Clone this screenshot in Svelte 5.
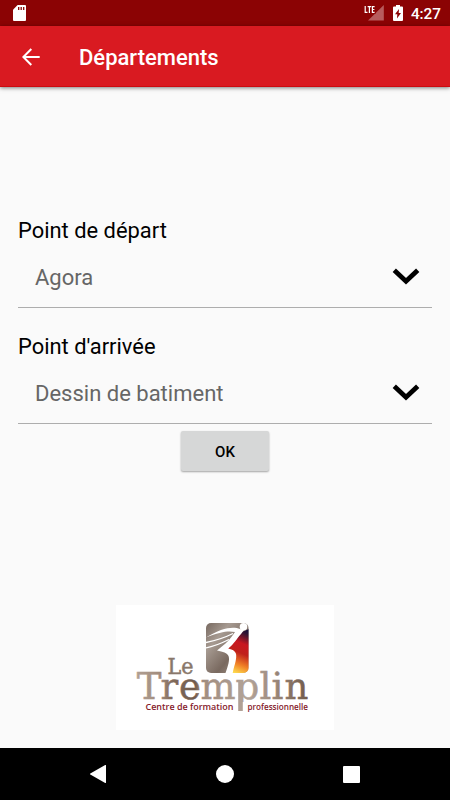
<script lang="ts">
  type Field = { label: string; value: string };

  export let title = 'Départements';
  export let clock = '4:27';
  export let fields: Field[] = [
    { label: 'Point de départ', value: 'Agora' },
    { label: "Point d'arrivée", value: 'Dessin de batiment' },
  ];
</script>

<div class="screen">
  <div class="status">
    <svg class="sd" width="13" height="16" viewBox="0 0 13 16">
      <path fill="#fff" d="M4.6 0H12a1 1 0 0 1 1 1v14a1 1 0 0 1-1 1H1a1 1 0 0 1-1-1V4.8z" />
      <path stroke="#8b0304" stroke-width="1.3" d="M5.700 2v3M8.200 2v3M10.700 2v3" />
    </svg>
    <div class="indicators">
      <svg width="20" height="17" viewBox="0 0 20 17">
        <path fill="#b75c5d" d="M19.800 0v15.500H4z" />
        <path fill="#8b0304" d="M0 0h11.500v9H0z" />
        <path fill="none" stroke="#fff" stroke-width="1.200" d="M1.200 1v6.400h2.300M3.600 1.600h3.600M5.400 1.600V8M10.600 1.600H8.400v5.800h2.200M8.400 4.500h2" />
      </svg>
      <svg class="battery" width="10" height="16" viewBox="0 0 10 16">
        <path fill="#fff" d="M3 0h4v1.500h2a1 1 0 0 1 1 1V15a1 1 0 0 1-1 1H1a1 1 0 0 1-1-1V2.500a1 1 0 0 1 1-1h2z" />
        <path fill="#8b0304" d="M6 4L2 9.300h2.300L4 13.600 8 8H5.700z" />
      </svg>
      <span class="clock">{clock}</span>
    </div>
  </div>

  <header>
    <button class="back" aria-label="Retour">
      <svg width="18" height="18" viewBox="0 0 18 18">
        <path fill="none" stroke="#fff" stroke-width="2" d="M17.700 9H1.500M9.300 1L1.400 9l7.900 8" />
      </svg>
    </button>
    <h1>{title}</h1>
  </header>

  <main>
    {#each fields as field}
      <section class="field">
        <h2>{field.label}</h2>
        <button class="select">
          <span>{field.value}</span>
          <svg width="28" height="18" viewBox="0 0 28 18">
            <path fill="none" stroke="#000" stroke-width="4.800" d="M2.300 2.300L14 13.200 25.700 2.300" />
          </svg>
        </button>
      </section>
    {/each}
    <button class="ok">OK</button>

    <div class="logo">
      <svg width="218" height="125" viewBox="0 0 218 125">
        <defs>
          <linearGradient id="taupe" x1="0" y1="0" x2="1" y2="1">
            <stop offset="0" stop-color="#776960" />
            <stop offset=".28" stop-color="#a69a91" />
            <stop offset=".62" stop-color="#79695f" />
            <stop offset="1" stop-color="#b0a298" />
          </linearGradient>
          <linearGradient id="flame" gradientUnits="userSpaceOnUse" x1="135" y1="25" x2="117" y2="68">
            <stop offset="0" stop-color="#0b0b3c" />
            <stop offset=".12" stop-color="#321432" />
            <stop offset=".34" stop-color="#c91720" />
            <stop offset=".54" stop-color="#c0201b" />
            <stop offset=".78" stop-color="#f08026" />
            <stop offset="1" stop-color="#ffe352" />
          </linearGradient>
          <linearGradient id="letters" gradientUnits="userSpaceOnUse" x1="21" y1="0" x2="192" y2="0">
            <stop offset="0" stop-color="#b09f92" />
            <stop offset=".14" stop-color="#a18b7c" />
            <stop offset=".2" stop-color="#826b5b" />
            <stop offset=".34" stop-color="#715b4c" />
            <stop offset=".38" stop-color="#a08c7e" />
            <stop offset=".65" stop-color="#b2a398" />
            <stop offset=".78" stop-color="#a18e81" />
            <stop offset="1" stop-color="#705a4a" />
          </linearGradient>
          <clipPath id="badge">
            <rect x="90" y="18" width="42.500" height="50" rx="5" />
          </clipPath>
        </defs>
        <g clip-path="url(#badge)">
          <path fill="url(#taupe)" d="M90 18h43v50H90z" />
          <path fill="url(#flame)" d="M133 24l-7 3-16 16 9 5-6 21h20z" />
          <path fill="#fff" d="M124 24C117 21 105 23 90 32.500c14-5.500 22-7 29-5.500-2.500 3.500-5 7.500-9.500 11.500L101 45.500c6 1.500 10.200 2.200 11.500 5.500 1.500 4-.5 10-3 17h7.200c1.300-7 3.800-12 3.500-18-.1-3.400-3.500-5.500-8-6.500 6-4.500 8.500-10 12.800-14.500l3-4z" />
          <path fill="none" stroke="#fff" stroke-width="1.300" d="M90 37.500c10-2 18-4.500 27-9M90 42.800c9-1.500 16-4.800 23-8.300" />
        </g>
        <circle cx="127.500" cy="21.800" r="3.800" fill="#fff" />
        <text class="name" x="51.500" y="69" font-size="22" textLength="26" lengthAdjust="spacingAndGlyphs" fill="#89776a" stroke="#89776a">Le</text>
        <text class="name" x="20.800 44.500 63 84.500 119.500 143.500 155.500 168.600" y="94.200" font-size="37" fill="url(#letters)" stroke="url(#letters)">Tremplin</text>
        <!-- the stem of the p runs down without a serif -->
        <path fill="#fff" d="M118 97h15v9h-15z" />
        <path fill="#b0a095" d="M122.200 76h4.600v30h-4.600z" />
        <text class="tag" x="29.500" y="104.700" textLength="88" lengthAdjust="spacingAndGlyphs">Centre de formation</text>
        <text class="tag" x="131.500" y="104.700" textLength="60.500" lengthAdjust="spacingAndGlyphs">professionnelle</text>
      </svg>
    </div>
  </main>

  <nav>
    <svg width="16" height="18" viewBox="0 0 16 18"><path fill="#fff" d="M16 .5v17a.5.5 0 0 1-.8.4L.3 9.500a.6.6 0 0 1 0-1L15.200.1a.5.5 0 0 1 .8.4z" /></svg>
    <svg width="18" height="18" viewBox="0 0 18 18"><circle cx="9" cy="9" r="9" fill="#fff" /></svg>
    <svg width="17" height="17" viewBox="0 0 17 17"><rect width="17" height="17" rx="1" fill="#fff" /></svg>
  </nav>
</div>

<style>
  :global(body) {
    margin: 0;
  }
  .screen {
    width: 450px;
    height: 800px;
    display: flex;
    flex-direction: column;
    overflow: hidden;
    background: #fafafa;
    font-family: Roboto, sans-serif;
  }
  button {
    border: none;
    padding: 0;
    background: none;
    font-family: inherit;
  }
  svg {
    display: block;
    flex: none;
  }

  .status {
    height: 26px;
    flex: none;
    box-sizing: border-box;
    padding: 5px 9px 0 13px;
    display: flex;
    justify-content: space-between;
    background: #8b0304;
  }
  .indicators {
    display: flex;
    align-items: flex-start;
  }
  .battery {
    margin: 0 8px 0 9px;
  }
  .clock {
    color: #fff;
    font-size: 15.3px;
    font-weight: 500;
    line-height: 18px;
  }

  header {
    height: 61px;
    flex: none;
    box-sizing: border-box;
    padding: 1px 22px 0;
    display: flex;
    align-items: center;
    background: #d91a21;
    border-bottom: 1px solid #cc0b10;
    box-shadow: 0 1px 4px rgba(0, 0, 0, 0.5);
  }
  .back {
    width: 57px;
  }
  h1 {
    margin: 3px 0 0;
    color: #fff;
    font-size: 22px;
    font-weight: 500;
    line-height: 26px;
  }

  main {
    flex: 1;
    padding: 131px 18px 0;
    display: flex;
    flex-direction: column;
    align-items: center;
  }
  .field {
    width: 414px;
    height: 116.4px;
    flex: none;
  }
  h2 {
    margin: 0;
    font-size: 21.9px;
    font-weight: 400;
    line-height: 26px;
    color: #000;
  }
  .select {
    width: 100%;
    height: 64px;
    padding: 2px 12px 0 17px;
    display: flex;
    align-items: center;
    justify-content: space-between;
    border-bottom: 1px solid #adadad;
    color: #666;
    font-size: 22px;
  }
  .select span {
    margin-top: 2px;
  }
  .ok {
    width: 88px;
    height: 40px;
    flex: none;
    margin-top: -19.8px;
    padding-top: 2px;
    border-radius: 2px;
    background: #d6d7d7;
    box-shadow: 0 1px 2px rgba(0, 0, 0, 0.35);
    color: #000;
    font-size: 15px;
    font-weight: 500;
  }
  .logo {
    margin-top: 134px;
    background: #fff;
  }
  .name {
    font-family: 'DejaVu Serif', serif;
    stroke-width: 0.5px;
  }
  .tag {
    font-family: 'Open Sans', sans-serif;
    font-size: 9px;
    font-weight: 600;
    fill: #85202a;
  }

  nav {
    height: 52px;
    flex: none;
    box-sizing: border-box;
    padding: 0 90px;
    display: flex;
    align-items: center;
    justify-content: space-between;
    background: #000;
  }
</style>
